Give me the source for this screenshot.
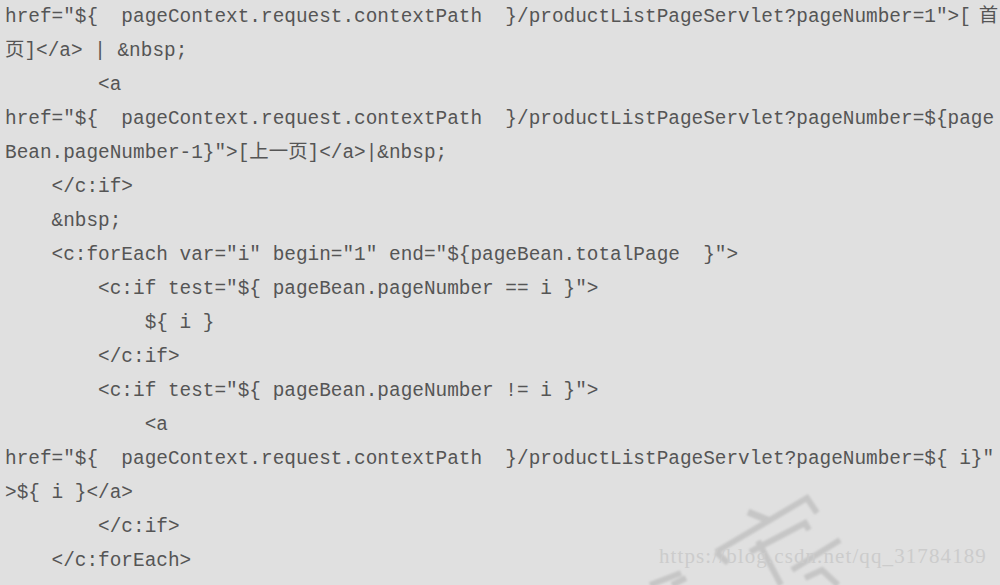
import React from "react";

const lines: React.ReactNode[] = [
  <>
    {'href="${  pageContext.request.contextPath  }/productListPageServlet?pageNumber=1">['}
    <span className="ml-[8px]">首</span>
  </>,
  "页]</a> | &nbsp;",
  "        <a",
  'href="${  pageContext.request.contextPath  }/productListPageServlet?pageNumber=${page',
  'Bean.pageNumber-1}">[上一页]</a>|&nbsp;',
  "    </c:if>",
  "    &nbsp;",
  '    <c:forEach var="i" begin="1" end="${pageBean.totalPage  }">',
  '        <c:if test="${ pageBean.pageNumber == i }">',
  "            ${ i }",
  "        </c:if>",
  '        <c:if test="${ pageBean.pageNumber != i }">',
  "            <a",
  'href="${  pageContext.request.contextPath  }/productListPageServlet?pageNumber=${ i}"',
  ">${ i }</a>",
  "        </c:if>",
  "    </c:forEach>",
];

export default function App() {
  return (
    <div className="relative w-[1000px] h-[585px] overflow-hidden bg-[#e0e0e0]">
      <div
        className="pl-[5px] text-[19.4px] leading-[34px] text-[#555555]"
        style={{ fontFamily: '"Liberation Mono", "Noto Sans CJK SC", monospace' }}
      >
        {lines.map((l, i) => (
          <div key={i} className="whitespace-pre h-[34px]">
            {l}
          </div>
        ))}
      </div>

      {/* watermark */}
      <svg
        className="absolute left-[640px] top-[470px] pointer-events-none"
        width="360"
        height="115"
        viewBox="640 470 360 115"
      >
        <defs>
          <filter id="wm" x="-20%" y="-20%" width="140%" height="140%">
            <feGaussianBlur stdDeviation="0.8" />
          </filter>
        </defs>
        <g
          fill="none"
          stroke="#c6c6c6"
          strokeWidth="6"
          strokeLinejoin="miter"
          filter="url(#wm)"
        >
          <path d="M748 512 L770 521" strokeWidth="7" />
          <path d="M716 552 L807 498 L817 513" />
          <path d="M716 552 L728 563" />
          <path d="M750 552 L805 523 L809 530" />
          <path d="M758 541 L781 585" />
          <path d="M840 540 L792 570" />
          <path d="M650 585 L681 573" />
          <path d="M672 585 L686 578" />
          <path d="M805 578 L822 570 L838 585" />
        </g>
      </svg>
      <div
        className="absolute left-[659px] top-[546px] text-[21px] tracking-[1.1px] leading-none text-[#cccccc] whitespace-nowrap"
        style={{ fontFamily: '"Liberation Serif", serif' }}
      >
        https://blog.csdn.net/qq_31784189
      </div>
    </div>
  );
}
